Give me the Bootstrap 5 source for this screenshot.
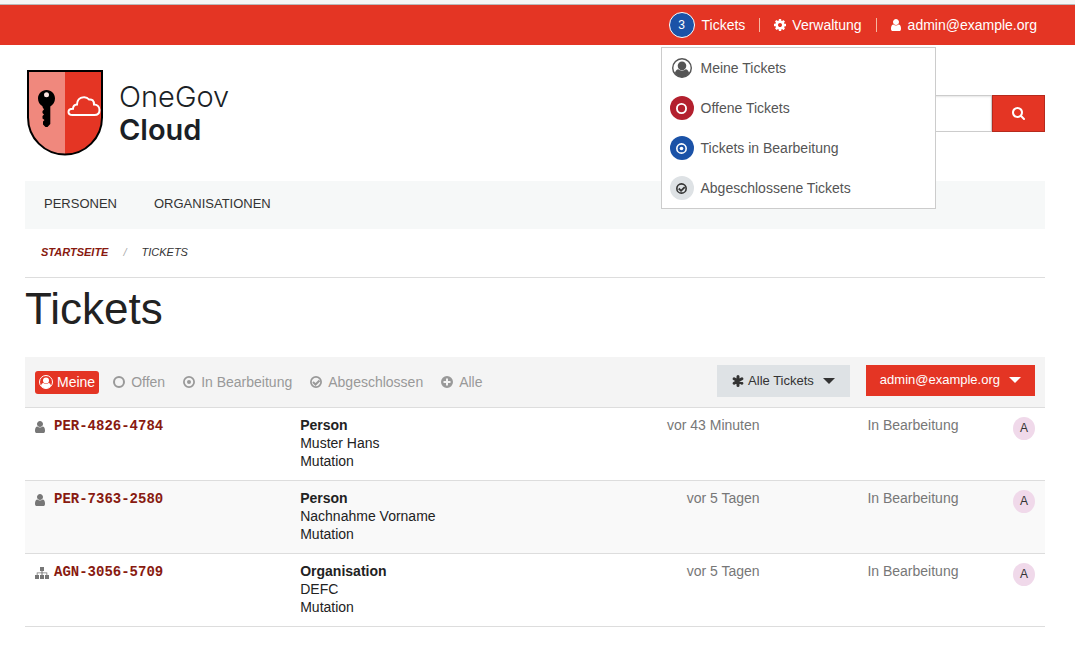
<!DOCTYPE html>
<html lang="de">
<head>
<meta charset="utf-8">
<meta name="viewport" content="width=device-width, initial-scale=1">
<title>Tickets - OneGov Cloud</title>
<link href="https://cdn.jsdelivr.net/npm/bootstrap@5.3.0/dist/css/bootstrap.min.css" rel="stylesheet">
<style>
:root { --brand: #e43524; --link: #881a10; --line: #dddddd; }
body { font-family: "Liberation Sans", Arial, sans-serif; font-size: 14px; line-height: 18px; color: #222; background: #fff; }
a { text-decoration: none; }
svg { fill: currentColor; flex-shrink: 0; }
.frame-edge { height: 5px; background: #f5f5f5; border-bottom: 1px solid #b9b9b9; }
.topbar { height: 40px; background: var(--brand); padding-right: 38px; color: #fff; }
.topbar a { color: #fff; }
.topbar .divider { width: 1px; height: 14px; background: #f6b7a0; margin: 0 14px; }
.topbar .with-icon { gap: 6px; }
.topbar .account { gap: 7px; }
.bubble { width: 26px; height: 26px; border-radius: 50%; border: 1px solid #fff; background: #1b52a7; font-size: 12px; }
.ticket-toggle { gap: 7px; }
.topbar .dropdown-menu { top: 100%; left: -8px; width: 275px; margin-top: 2px; padding: 0; border: 1px solid #ccc; border-radius: 0; font-size: 14px; }
.topbar .dropdown-item { height: 40px; gap: 7px; padding: 0 8px; color: #555; }
.state { width: 24px; height: 24px; border-radius: 50%; }
.state-open { background: #b3202e; color: #fff; }
.state-pending { background: #1b52a7; color: #fff; }
.state-closed { background: #dee2e5; color: #333; }
.page { padding: 0 30px 0 25px; }
.masthead { padding: 25px 0; }
.brand-link { gap: 14px; }
.wordmark { font-family: Inter, "Liberation Sans", sans-serif; font-size: 29px; line-height: 33px; color: #1b1f26; font-weight: 300; }
.wordmark strong { font-weight: 600; }
.search { margin-top: 25px; }
.search .form-control { height: 37px; border: 1px solid #ccc; border-radius: 0; box-shadow: inset 0 1px 2px rgba(0,0,0,.1); }
.search .btn { flex: 0 0 53px; border-radius: 0; background: var(--brand); border: 1px solid #b62a1d; color: #fff; }
.mainnav { height: 48px; padding: 0 19px; gap: 37px; background: #f6f8f8; font-size: 13px; }
.mainnav a { color: #333; line-height: 46px; }
.crumbs { height: 49px; border-bottom: 1px solid var(--line); font-size: 11px; font-style: italic; text-transform: uppercase; padding: 0 16px 2px; margin: 0; --bs-breadcrumb-item-padding-x: 15px; --bs-breadcrumb-divider-color: #aaa; }
.crumbs a { color: var(--link); font-weight: bold; }
.crumbs .active { color: #333; }
h1 { font-size: 44px; line-height: 62px; margin: 0 0 17px; font-weight: 400; }
.filters { min-height: 51px; background: #f4f4f4; border-bottom: 1px solid var(--line); padding: 0 10px; }
.filters .states { gap: 18px; }
.states a { color: #999; gap: 6px; height: 23px; }
.states .current { background: var(--brand); color: #fff; border-radius: 3px; padding: 0 4px; gap: 4px; margin-right: -4px; }
.filters .btn { border: 0; border-radius: 0; font-size: 13px; line-height: 18px; height: 32px; padding: 0 15px; }
.btn-kind { background: #dee2e5; color: #333; }
.filters .btn-owner { background: var(--brand); color: #fff; height: 31px; padding: 0 14px 2px; }
.caret { margin-left: 9px; }
.tickets { table-layout: fixed; width: 100%; margin: 0; }
.tickets td { padding: 8px 10px 10px; border-bottom: 1px solid var(--line); vertical-align: top; }
.tickets tr:nth-child(even) { background: #f9f9f9; }
.tickets .icon { color: #777; }
.tickets .number { font-family: "Liberation Mono", monospace; font-weight: bold; color: var(--link); line-height: 21px; }
.tickets .slot { width: 19px; }
.muted { color: #777; }
.avatar { width: 22px; height: 23px; border-radius: 50%; background: #f0d9ea; color: #333; font-size: 12px; padding-bottom: 2px; margin-top: 1px; }
</style>
</head>
<body>
<svg class="d-none" aria-hidden="true">
  <symbol id="i-user" viewBox="256 128 1280 1536"><path d="M1536 1399q0 109-62.500 187t-150.500 78h-854q-88 0-150.500-78t-62.500-187q0-85 8.500-160.500t31.500-152 58.500-131 94-89 134.500-34.500q131 128 313 128t313-128q76 0 134.500 34.500t94 89 58.500 131 31.500 152 8.500 160.500zm-256-887q0 159-112.500 271.500t-271.500 112.500-271.500-112.500-112.500-271.500 112.500-271.500 271.500-112.500 271.500 112.500 112.500 271.500z"/></symbol>
  <symbol id="i-cog" viewBox="128 128 1536 1536"><path d="M1152 896q0-106-75-181t-181-75-181 75-75 181 75 181 181 75 181-75 75-181zm512-109v222q0 12-8 23t-20 13l-185 28q-19 54-39 91 35 50 107 138 10 12 10 25t-9 23q-27 37-99 108t-94 71q-12 0-26-9l-138-108q-44 23-91 38-16 136-29 186-7 28-36 28h-222q-14 0-24.500-8.500t-11.500-21.500l-28-184q-49-16-90-37l-141 107q-10 9-25 9-14 0-25-11-126-114-165-168-7-10-7-23 0-12 8-23 15-21 51-66.500t54-70.500q-27-50-41-99l-183-27q-13-2-21-12.500t-8-23.500v-222q0-12 8-23t19-13l186-28q14-46 39-92-40-57-107-138-10-12-10-24 0-10 9-23 26-36 98.500-107.500t94.500-71.500q13 0 26 10l138 107q44-23 91-38 16-136 29-186 7-28 36-28h222q14 0 24.500 8.500t11.500 21.500l28 184q49 16 90 37l142-107q9-9 24-9 13 0 25 10 129 119 165 170 7 8 7 22 0 12-8 23-15 21-51 66.500t-54 70.500q26 50 41 98l183 28q13 2 21 12.500t8 23.500z"/></symbol>
  <symbol id="i-search" viewBox="64 128 1664 1664"><path d="M1216 832q0-185-131.500-316.500t-316.500-131.500-316.500 131.500-131.500 316.500 131.500 316.500 316.500 131.500 316.500-131.500 131.500-316.500zm512 832q0 52-38 90t-90 38q-54 0-90-38l-343-342q-179 124-399 124-143 0-273.500-55.500t-225-150-150-225-55.500-273.500 55.500-273.500 150-225 225-150 273.500-55.500 273.500 55.500 225 150 150 225 55.500 273.500q0 220-124 399l343 343q37 37 37 90z"/></symbol>
  <symbol id="i-mine" viewBox="0 0 28 28"><circle cx="14" cy="14" r="13" fill="none" stroke="currentColor" stroke-width="2"/><ellipse cx="14" cy="11" rx="6" ry="6"/><path d="M4 21.500C4.500 18 6.500 16 9 15.800C12 18.500 16 18.500 19 15.800C21.500 16 23.500 18 24 21.500C21.500 25 17.500 27 14 27S6.500 25 4 21.500Z"/></symbol>
  <symbol id="i-open" viewBox="0 0 24 24"><circle cx="12" cy="12" r="10" fill="none" stroke="currentColor" stroke-width="4"/></symbol>
  <symbol id="i-pending" viewBox="0 0 24 24"><circle cx="12" cy="12" r="10.200" fill="none" stroke="currentColor" stroke-width="3.500"/><circle cx="12" cy="12" r="4"/></symbol>
  <symbol id="i-closed" viewBox="0 0 24 24"><circle cx="12" cy="12" r="10.200" fill="none" stroke="currentColor" stroke-width="3.500"/><path d="M6 12L11 17L19 9" fill="none" stroke="currentColor" stroke-width="4"/></symbol>
  <symbol id="i-all" viewBox="0 0 24 24"><path fill-rule="evenodd" d="M12 0A12 12 0 1 1 12 24A12 12 0 1 1 12 0ZM10 5V10H5V14H10V19H14V14H19V10H14V5Z"/></symbol>
  <symbol id="i-asterisk" viewBox="0 0 24 24"><path d="M12 3V21M4.200 7.500L19.800 16.500M19.800 7.500L4.200 16.500" stroke="currentColor" stroke-width="6" stroke-linecap="round"/></symbol>
  <symbol id="i-org" viewBox="0 0 28 24"><path d="M10 0h8v8h-3v3h9.500v5H28v8h-8v-8h3v-3.500h-8V16h3v8h-8v-8h3v-3.500H5V16h3v8H0v-8h3.500v-5H13V8h-3z"/></symbol>
  <symbol id="i-caret" viewBox="0 0 12 6"><path d="M0 0H12L6 6Z"/></symbol>
</svg>

<div class="frame-edge"></div>
<nav class="topbar d-flex justify-content-end align-items-center" aria-label="Benutzer">
  <div class="position-relative h-100 d-flex align-items-center">
    <a href="#" class="ticket-toggle d-flex align-items-center" aria-expanded="true"><span class="bubble d-flex align-items-center justify-content-center">3</span>Tickets</a>
    <div class="dropdown-menu show">
      <a class="dropdown-item d-flex align-items-center" href="#"><span class="state d-flex align-items-center justify-content-center"><svg width="20" height="20"><use href="#i-mine"/></svg></span>Meine Tickets</a>
      <a class="dropdown-item d-flex align-items-center" href="#"><span class="state state-open d-flex align-items-center justify-content-center"><svg width="11" height="11"><use href="#i-open"/></svg></span>Offene Tickets</a>
      <a class="dropdown-item d-flex align-items-center" href="#"><span class="state state-pending d-flex align-items-center justify-content-center"><svg width="11" height="11"><use href="#i-pending"/></svg></span>Tickets in Bearbeitung</a>
      <a class="dropdown-item d-flex align-items-center" href="#"><span class="state state-closed d-flex align-items-center justify-content-center"><svg width="11" height="11"><use href="#i-closed"/></svg></span>Abgeschlossene Tickets</a>
    </div>
  </div>
  <span class="divider"></span>
  <a href="#" class="with-icon d-flex align-items-center"><svg width="12" height="12"><use href="#i-cog"/></svg>Verwaltung</a>
  <span class="divider"></span>
  <a href="#" class="with-icon account d-flex align-items-center"><svg width="10" height="12"><use href="#i-user"/></svg>admin@example.org</a>
</nav>

<div class="page">
  <header class="masthead d-flex justify-content-between">
    <a href="#" class="brand-link d-flex align-items-center" aria-label="OneGov Cloud">
      <svg width="80" height="86" viewBox="-2 0 80 86">
        <path d="M1 1H38V84.500A37 37 0 0 1 1 47Z" fill="#f0887d"/>
        <path d="M38 1H75V47A37 37.500 0 0 1 38 84.500Z" fill="#e43524"/>
        <path d="M1 1H75V47.500A37 37 0 0 1 1 47.500Z" fill="none" stroke="#000" stroke-width="2"/>
        <path fill="#000" d="M19.500 20C24.500 20 28 23.700 28 28.500C28 32 26 35 23.300 36.500V54L20.500 57H18.500L16 54.500V51.500L17.500 50L15.500 48.500V46L17 44.500L15.500 43V41L17 39.500L15.500 37V36.300C12.500 34.500 11 31.800 11 28.500C11 23.700 14.700 20 19.500 20Z"/>
        <circle cx="19.500" cy="24.700" r="2.500" fill="#fbe3e0"/>
        <path fill="none" stroke="#fff" stroke-width="2" d="M45.500 45H67.500C70.500 45 72.500 43 72.500 40C72.500 36.500 70 34.500 67 34.500C67 30.500 65 29 62 29.500C60.500 27.500 58.500 27 56.500 27.200C52.500 27.500 50 30.500 50 34.500C47.500 34.800 46 36.500 46 38.800C43.500 38.800 41.500 40 41.500 42C41.500 44 43.500 45 45.500 45Z"/>
      </svg>
      <span class="wordmark">OneGov<br><strong>Cloud</strong></span>
    </a>
    <form class="search col-4 d-flex align-self-start">
      <input type="search" class="form-control" aria-label="Suchbegriff">
      <button type="button" class="btn d-flex align-items-center justify-content-center" aria-label="Suchen"><svg width="13" height="13"><use href="#i-search"/></svg></button>
    </form>
  </header>
  <nav class="mainnav d-flex" aria-label="Hauptnavigation"><a href="#">PERSONEN</a><a href="#">ORGANISATIONEN</a></nav>
  <nav aria-label="Brotkrumen">
    <ol class="breadcrumb crumbs align-items-center">
      <li class="breadcrumb-item"><a href="#">Startseite</a></li>
      <li class="breadcrumb-item active" aria-current="page">Tickets</li>
    </ol>
  </nav>
  <main>
    <h1>Tickets</h1>
    <div class="filters d-flex justify-content-between">
      <div class="states d-flex align-items-center">
        <a href="#" class="current d-flex align-items-center"><svg width="14" height="14"><use href="#i-mine"/></svg>Meine</a>
        <a href="#" class="d-flex align-items-center"><svg width="12" height="12"><use href="#i-open"/></svg>Offen</a>
        <a href="#" class="d-flex align-items-center"><svg width="12" height="12"><use href="#i-pending"/></svg>In Bearbeitung</a>
        <a href="#" class="d-flex align-items-center"><svg width="12" height="12"><use href="#i-closed"/></svg>Abgeschlossen</a>
        <a href="#" class="d-flex align-items-center"><svg width="12" height="12"><use href="#i-all"/></svg>Alle</a>
      </div>
      <div class="d-flex gap-3 pt-2">
        <button type="button" class="btn btn-kind d-flex align-items-center"><svg class="me-1" width="12" height="12"><use href="#i-asterisk"/></svg>Alle Tickets<svg class="caret" width="12" height="6"><use href="#i-caret"/></svg></button>
        <button type="button" class="btn btn-owner d-flex align-items-center">admin@example.org<svg class="caret" width="12" height="6"><use href="#i-caret"/></svg></button>
      </div>
    </div>
    <table class="tickets">
      <colgroup><col style="width:26%"><col style="width:27%"><col style="width:20%"><col style="width:19.5%"><col style="width:7.5%"></colgroup>
      <tbody>
        <tr>
          <td><a href="#" class="number d-flex align-items-center"><span class="slot icon d-flex"><svg width="10" height="12"><use href="#i-user"/></svg></span>PER-4826-4784</a></td>
          <td><strong>Person</strong><br>Muster Hans<br>Mutation</td>
          <td class="muted text-end">vor 43 Minuten</td>
          <td class="muted text-end">In Bearbeitung</td>
          <td><span class="avatar d-flex align-items-center justify-content-center ms-auto">A</span></td>
        </tr>
        <tr>
          <td><a href="#" class="number d-flex align-items-center"><span class="slot icon d-flex"><svg width="10" height="12"><use href="#i-user"/></svg></span>PER-7363-2580</a></td>
          <td><strong>Person</strong><br>Nachnahme Vorname<br>Mutation</td>
          <td class="muted text-end">vor 5 Tagen</td>
          <td class="muted text-end">In Bearbeitung</td>
          <td><span class="avatar d-flex align-items-center justify-content-center ms-auto">A</span></td>
        </tr>
        <tr>
          <td><a href="#" class="number d-flex align-items-center"><span class="slot icon d-flex"><svg width="14" height="12"><use href="#i-org"/></svg></span>AGN-3056-5709</a></td>
          <td><strong>Organisation</strong><br>DEFC<br>Mutation</td>
          <td class="muted text-end">vor 5 Tagen</td>
          <td class="muted text-end">In Bearbeitung</td>
          <td><span class="avatar d-flex align-items-center justify-content-center ms-auto">A</span></td>
        </tr>
      </tbody>
    </table>
  </main>
</div>
<script src="https://cdn.jsdelivr.net/npm/bootstrap@5.3.0/dist/js/bootstrap.bundle.min.js"></script>
</body>
</html>
